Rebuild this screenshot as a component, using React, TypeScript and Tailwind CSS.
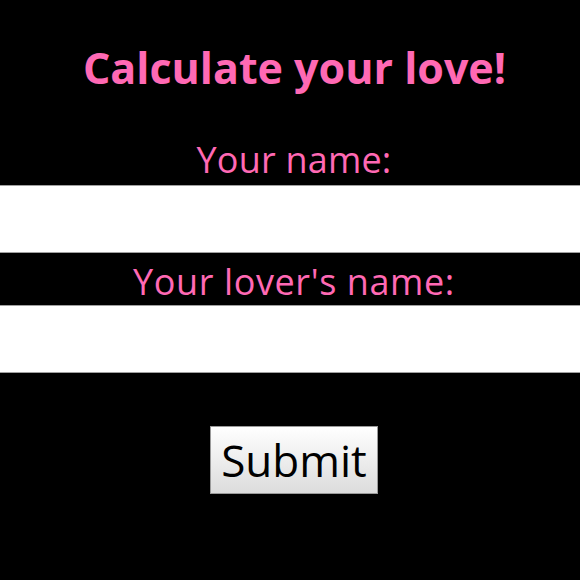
import { useState } from "react";

export default function App() {
  const [name, setName] = useState("");
  const [lover, setLover] = useState("");

  return (
    <div className="min-h-[580px] w-full bg-black font-['Open_Sans',sans-serif]">
      {/* Title */}
      <div className="flex h-[134px] items-center justify-center pl-[9px]">
        <h1 className="text-[43px] font-bold leading-none text-[#ff69b4]">Calculate your love!</h1>
      </div>

      {/* First name */}
      <div className="flex h-[51px] items-center justify-center pl-[8px]">
        <label htmlFor="name" className="text-[36px] leading-none tracking-[0.2px] text-[#ff69b4]">Your name:</label>
      </div>
      <input
        id="name"
        value={name}
        onChange={(e) => setName(e.target.value)}
        className="block h-[68px] w-full border-y border-[#a0a0a0] bg-white px-2 text-2xl outline-none"
      />

      {/* Lover's name */}
      <div className="flex h-[52px] items-center justify-center pt-[6px] pl-[8px]">
        <label htmlFor="lover" className="text-[36px] leading-none tracking-[0.6px] text-[#ff69b4]">Your lover's name:</label>
      </div>
      <input
        id="lover"
        value={lover}
        onChange={(e) => setLover(e.target.value)}
        className="block h-[68px] w-full border-y border-[#a0a0a0] bg-white px-2 text-2xl outline-none"
      />

      {/* Submit */}
      <div className="flex justify-center pt-[53px] pl-[8px]">
        <button className="h-[68px] w-[168px] border border-[#9a9a9a] bg-gradient-to-b from-white to-[#dcdcdc] text-[44px] leading-none text-black">
          Submit
        </button>
      </div>
    </div>
  );
}
